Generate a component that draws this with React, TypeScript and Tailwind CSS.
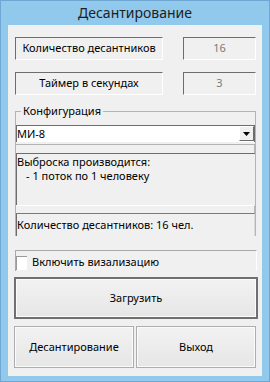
import React from 'react';

const font = { fontFamily: '"Noto Sans", "DejaVu Sans", sans-serif' };

const Sunken: React.FC<{ className?: string; children?: React.ReactNode }> = ({ className = '', children }) => (
  <div
    className={`flex items-center justify-center h-[23px] border-t border-l border-[#6d6d6d] border-b border-r border-b-white border-r-white bg-[#f0f0f0] text-[11px] ${className}`}
  >
    {children}
  </div>
);

const WinButton: React.FC<{ className?: string; children: React.ReactNode; primary?: boolean }> = ({
  className = '',
  children,
  primary,
}) => (
  <button
    className={`h-[42px] flex items-center justify-center text-[11px] text-black bg-gradient-to-b from-[#f2f2f2] to-[#e6e6e6] ${
      primary ? 'border-2 border-[#707070]' : 'border border-[#adadad]'
    } ${className}`}
  >
    <span className="w-full h-full flex items-center justify-center border border-[#fbfbfb]">{children}</span>
  </button>
);

export default function App() {
  return (
    <div className="w-[270px] h-[382px] bg-[#91c9ed] border border-[#6fa6d2] flex flex-col" style={font}>
      <div className="h-[24px] pb-[2px] flex items-center justify-center text-[14px] text-[#1e1e1e]">Десантирование</div>

      <div className="mx-[7px] h-[351px] bg-[#f0f0f0] flex flex-col px-[6px] text-black">
        <div className="flex mt-[12px] ml-[1px]">
          <Sunken className="w-[148px]">Количество десантников</Sunken>
          <Sunken className="w-[73px] ml-[20px] text-[#7a7a7a]">16</Sunken>
        </div>
        <div className="flex mt-[12px] ml-[1px]">
          <Sunken className="w-[148px]">Таймер в секундах</Sunken>
          <Sunken className="w-[73px] ml-[20px] text-[#7a7a7a]">3</Sunken>
        </div>

        <fieldset className="mt-[9px] ml-[1px] w-[241px] border-t border-l border-r border-[#b4b4b4]">
          <legend className="ml-[5px] px-[2px] text-[11px] leading-[14px]">Конфигурация</legend>
          <div className="mt-[7px] h-[17px] flex bg-white border-t border-l border-[#6d6d6d] border-r border-r-[#6d6d6d]">
            <div className="flex-1 text-[11px] leading-[15px]">МИ-8</div>
            <div className="w-[15px] h-[15px] flex items-center justify-center bg-[#f0f0f0] border-r border-b border-[#6d6d6d] border-t border-l border-t-white border-l-white">
              <svg width="7" height="4" viewBox="0 0 7 4">
                <path d="M0 0h7L3.5 4z" fill="#000" />
              </svg>
            </div>
          </div>
          <div className="mt-[2px] h-[9px] border-t border-r border-[#b4b4b4]" />
          <div className="h-[52px] border-t border-l border-[#6d6d6d] text-[11px] leading-[14px] pt-[1px]">
            <div>Выброска производится:</div>
            <div className="pl-[9px]">- 1 поток по 1 человеку</div>
          </div>
          <div className="h-[9px] border-t border-t-white border-b border-b-[#7a7a7a] border-r border-r-[#b4b4b4]" />
          <div className="h-[22px] flex items-center border-l border-[#6d6d6d] border-r border-r-[#dcdcdc] text-[11px]">
            Количество десантников: 16 чел.
          </div>
        </fieldset>

        <div className="mt-[14px] ml-[1px] w-[242px] h-[21px] border-t border-l border-[#a9a9a9] border-r border-r-white flex items-center">
          <div className="w-[11px] h-[14px] bg-white border-t border-l border-[#9a9a9a] mt-[4px]" />
          <span className="ml-[5px] text-[11px] mt-[2px]">Включить визализацию</span>
        </div>

        <WinButton primary className="mt-[6px] w-[244px]">
          Загрузить
        </WinButton>
        <div className="flex gap-[2px] mt-[7px]">
          <WinButton className="w-[121px]">Десантирование</WinButton>
          <WinButton className="w-[121px]">Выход</WinButton>
        </div>
      </div>
    </div>
  );
}
